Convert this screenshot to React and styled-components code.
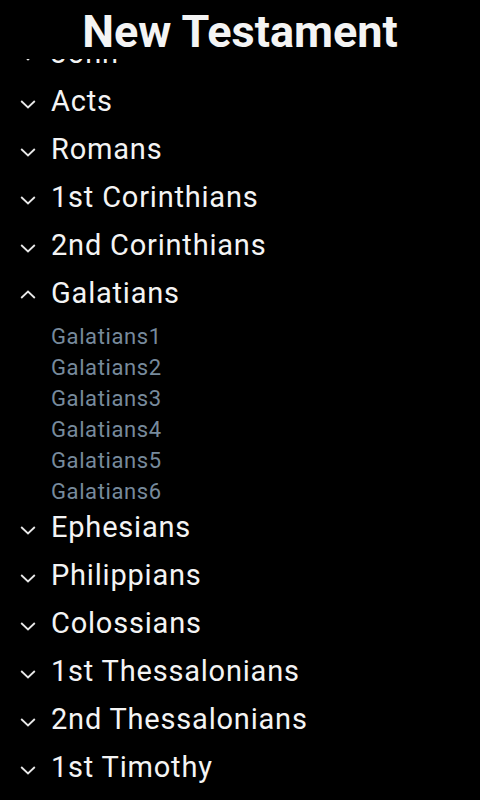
import React, { useLayoutEffect, useRef } from 'react';
import styled, { createGlobalStyle } from 'styled-components';

const GlobalStyle = createGlobalStyle`
  html, body {
    margin: 0;
    padding: 0;
    background: #000;
    height: 100%;
    overflow: hidden;
  }
  #root {
    height: 100%;
  }
`;

const Screen = styled.div`
  width: 480px;
  height: 800px;
  background: #000;
  display: flex;
  flex-direction: column;
  font-family: Roboto, "Liberation Sans", sans-serif;
`;

const Header = styled.div`
  height: 59px;
  flex-shrink: 0;
  display: flex;
  align-items: center;
  justify-content: center;
  background: #000;
`;

const Title = styled.h1`
  margin: 0;
  margin-top: 5px;
  color: #f4f4f4;
  font-size: 45px;
  font-weight: 700;
  line-height: 52px;
`;

const List = styled.div`
  flex: 1;
  overflow-y: scroll;
  scrollbar-width: none;

  &::-webkit-scrollbar {
    display: none;
  }
`;

const Group = styled.div`
  display: flex;
  flex-direction: column;
`;

const Row = styled.div`
  height: 48px;
  display: flex;
  align-items: center;
  cursor: pointer;
`;

const Arrow = styled.div`
  width: 51px;
  display: flex;
  justify-content: flex-start;
  padding-left: 20px;
  box-sizing: border-box;
  margin-top: ${p => (p.open ? '2px' : '6px')};
`;

const BookName = styled.span`
  color: #f4f4f4;
  font-size: 29px;
  letter-spacing: 0.8px;
  line-height: 48px;
`;

const Chapters = styled.div`
  display: flex;
  flex-direction: column;
  padding-top: 4px;
  margin-bottom: -4px;
`;

const Chapter = styled.div`
  height: 31px;
  line-height: 31px;
  padding-left: 51px;
  color: #778a9c;
  font-size: 22px;
  letter-spacing: 0.6px;
  cursor: pointer;
`;

const books = [
  ['Matthew', 28], ['Mark', 16], ['Luke', 24], ['John', 21], ['Acts', 28],
  ['Romans', 16], ['1st Corinthians', 16], ['2nd Corinthians', 13], ['Galatians', 6],
  ['Ephesians', 6], ['Philippians', 4], ['Colossians', 4], ['1st Thessalonians', 5],
  ['2nd Thessalonians', 3], ['1st Timothy', 6], ['2nd Timothy', 4], ['Titus', 3],
  ['Philemon', 1], ['Hebrews', 13], ['James', 5], ['1st Peter', 5], ['2nd Peter', 3],
  ['1st John', 5], ['2nd John', 1], ['3rd John', 1], ['Jude', 1], ['Revelation', 22],
];

function Chevron({ open }) {
  return (
    <svg width="16" height="9" viewBox="0 0 16 9">
      <path
        d={open ? 'M1.2 8 L8 1.5 L14.8 8' : 'M1.2 1 L8 7.5 L14.8 1'}
        fill="none"
        stroke="#e8e8e8"
        strokeWidth="1.8"
      />
    </svg>
  );
}

function App() {
  const listRef = useRef(null);
  const opened = 'Galatians';

  useLayoutEffect(() => {
    // John sits partly under the title, as in the scrolled list
    if (listRef.current) listRef.current.scrollTop = 3 * 48 + 30;
  }, []);

  return (
    <>
      <GlobalStyle />
      <Screen>
        <Header>
          <Title>New Testament</Title>
        </Header>
        <List ref={listRef}>
          {books.map(([name, count]) => {
            const open = name === opened;
            return (
              <Group key={name}>
                <Row>
                  <Arrow open={open}><Chevron open={open} /></Arrow>
                  <BookName>{name}</BookName>
                </Row>
                {open && (
                  <Chapters>
                    {Array.from({ length: count }, (_, i) => (
                      <Chapter key={i}>{name + (i + 1)}</Chapter>
                    ))}
                  </Chapters>
                )}
              </Group>
            );
          })}
        </List>
      </Screen>
    </>
  );
}

export default App;
